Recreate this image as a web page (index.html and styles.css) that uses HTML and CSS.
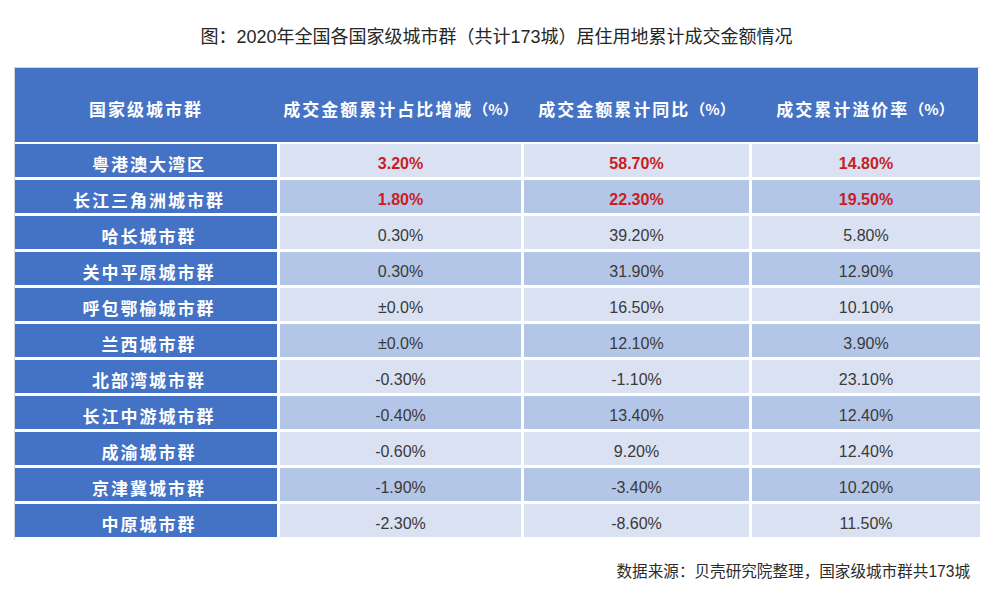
FILE: index.html
```html
<!DOCTYPE html>
<html lang="zh-CN">
<head>
<meta charset="utf-8">
<title>2020年全国各国家级城市群居住用地累计成交金额情况</title>
<link rel="stylesheet" href="styles.css">
</head>
<body>
<div class="page">
  <h1 class="title">图：2020年全国各国家级城市群（共计173城）居住用地累计成交金额情况</h1>
  <div class="frame">
    <div class="thead">
      <div class="th">国家级城市群</div>
      <div class="th">成交金额累计占比增减<span class="unit">（%）</span></div>
      <div class="th">成交金额累计同比<span class="unit">（%）</span></div>
      <div class="th">成交累计溢价率<span class="unit">（%）</span></div>
    </div>
    <div class="tbody">
      <div class="row light"><div class="name">粤港澳大湾区</div><div class="val hot">3.20%</div><div class="val hot">58.70%</div><div class="val hot">14.80%</div></div>
      <div class="row dark"><div class="name">长江三角洲城市群</div><div class="val hot">1.80%</div><div class="val hot">22.30%</div><div class="val hot">19.50%</div></div>
      <div class="row light"><div class="name">哈长城市群</div><div class="val">0.30%</div><div class="val">39.20%</div><div class="val">5.80%</div></div>
      <div class="row dark"><div class="name">关中平原城市群</div><div class="val">0.30%</div><div class="val">31.90%</div><div class="val">12.90%</div></div>
      <div class="row light"><div class="name">呼包鄂榆城市群</div><div class="val">±0.0%</div><div class="val">16.50%</div><div class="val">10.10%</div></div>
      <div class="row dark"><div class="name">兰西城市群</div><div class="val">±0.0%</div><div class="val">12.10%</div><div class="val">3.90%</div></div>
      <div class="row light"><div class="name">北部湾城市群</div><div class="val">-0.30%</div><div class="val">-1.10%</div><div class="val">23.10%</div></div>
      <div class="row dark"><div class="name">长江中游城市群</div><div class="val">-0.40%</div><div class="val">13.40%</div><div class="val">12.40%</div></div>
      <div class="row light"><div class="name">成渝城市群</div><div class="val">-0.60%</div><div class="val">9.20%</div><div class="val">12.40%</div></div>
      <div class="row dark"><div class="name">京津冀城市群</div><div class="val">-1.90%</div><div class="val">-3.40%</div><div class="val">10.20%</div></div>
      <div class="row light"><div class="name">中原城市群</div><div class="val">-2.30%</div><div class="val">-8.60%</div><div class="val">11.50%</div></div>
    </div>
  </div>
  <p class="source">数据来源：贝壳研究院整理，国家级城市群共173城</p>
</div>
</body>
</html>
```

FILE: styles.css
```css
html, body {
  margin: 0;
  padding: 0;
  background: #ffffff;
}

.page {
  width: 993px;
  padding-top: 25px;
  font-family: "Liberation Sans", "Noto Sans CJK SC", sans-serif;
  color: #333333;
}

.title {
  margin: 0 0 18px 0;
  font-size: 18px;
  line-height: 24px;
  font-weight: normal;
  text-align: center;
  color: #262626;
}

.frame {
  margin-left: 14px;
  width: 966px;
  border-left: 1px solid #d4d4d4;
  border-top: 1px solid #d4d4d4;
  box-sizing: border-box;
  padding-bottom: 3px;
}

.thead {
  display: grid;
  grid-template-columns: 262px 241px 225px 226px;
  column-gap: 3px;
  height: 74px;
  background: #4472c4;
  margin-right: 2px;
}

.th {
  display: flex;
  align-items: center;
  justify-content: center;
  padding-top: 6px;
  box-sizing: border-box;
  color: #ffffff;
  font-family: "Noto Sans CJK SC", sans-serif;
  font-size: 17px;
  font-weight: bold;
  letter-spacing: 2px;
  white-space: nowrap;
}

.unit {
  letter-spacing: 0;
  font-size: 15px;
}

.tbody {
  display: grid;
  row-gap: 3px;
  margin-top: 2px;
}

.row {
  display: grid;
  grid-template-columns: 262px 241px 225px 228px;
  column-gap: 3px;
  height: 33px;
}

.name,
.val {
  display: flex;
  align-items: center;
  justify-content: center;
  padding-top: 6px;
  box-sizing: border-box;
  white-space: nowrap;
}

.name {
  background: #4472c4;
  color: #ffffff;
  font-family: "Noto Sans CJK SC", sans-serif;
  font-size: 17px;
  font-weight: bold;
  letter-spacing: 2px;
  padding-left: 6px;
}

.val {
  font-size: 16px;
  color: #3a3a3a;
}

.light .val {
  background: #d9e1f2;
}

.dark .val {
  background: #b4c6e7;
}

.val.hot {
  color: #c81e1e;
  font-weight: bold;
}

.source {
  margin: 20px 23px 0 0;
  text-align: right;
  font-size: 15.6px;
  line-height: 24px;
  color: #2b2b2b;
}
```
